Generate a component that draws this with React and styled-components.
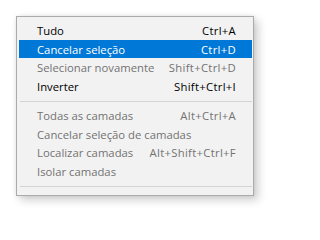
import React from "react";
import styled, { createGlobalStyle } from "styled-components";

const Global = createGlobalStyle`
  html, body { margin: 0; padding: 0; background: #ffffff; }
  body { font-family: "Segoe UI", "Open Sans", "Noto Sans", sans-serif; }
`;

const Page = styled.div`
  width: 271px;
  height: 213px;
  padding: 16px 0 0 16px;
  box-sizing: border-box;
`;

const Menu = styled.div`
  width: 238px;
  box-sizing: border-box;
  background: #f2f2f2;
  border: 1px solid #ababab;
  box-shadow: 4px 4px 9px rgba(0, 0, 0, 0.2), 0 0 4px rgba(0, 0, 0, 0.08);
  padding: 4px 1px 4px 2px;
  display: flex;
  flex-direction: column;
`;

const Item = styled.div`
  height: 18.5px;
  display: flex;
  align-items: center;
  justify-content: space-between;
  padding: 1px 16px 0 18px;
  box-sizing: border-box;
  font-size: 11.3px;
  white-space: nowrap;
  color: ${(p) => (p.$active ? "#ffffff" : p.$disabled ? "#727272" : "#000000")};
  background: ${(p) => (p.$active ? "#0078d7" : "transparent")};
`;

const Shortcut = styled.span`
  text-align: right;
  letter-spacing: 0.3px;
`;

const Separator = styled.div`
  height: 11px;
  padding-top: 6px;
  box-sizing: border-box;
  &::before {
    content: "";
    display: block;
    height: 1px;
    margin-left: 1px;
    background: #d4d4d4;
  }
`;

const groups = [
  [
    { label: "Tudo", key: "Ctrl+A" },
    { label: "Cancelar seleção", key: "Ctrl+D", active: true },
    { label: "Selecionar novamente", key: "Shift+Ctrl+D", disabled: true },
    { label: "Inverter", key: "Shift+Ctrl+I" },
  ],
  [
    { label: "Todas as camadas", key: "Alt+Ctrl+A", disabled: true },
    { label: "Cancelar seleção de camadas", key: "", disabled: true },
    { label: "Localizar camadas", key: "Alt+Shift+Ctrl+F", disabled: true },
    { label: "Isolar camadas", key: "", disabled: true },
  ],
];

export default function App() {
  return (
    <Page>
      <Global />
      <Menu>
        {groups.map((g, gi) => (
          <React.Fragment key={gi}>
            {g.map((it) => (
              <Item key={it.label} $active={it.active} $disabled={it.disabled}>
                <span>{it.label}</span>
                <Shortcut>{it.key}</Shortcut>
              </Item>
            ))}
            <Separator />
          </React.Fragment>
        ))}
      </Menu>
    </Page>
  );
}
